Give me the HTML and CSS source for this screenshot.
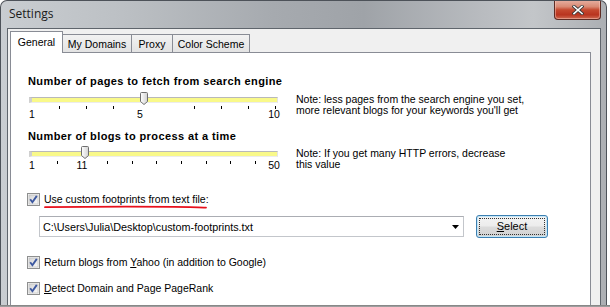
FILE: index.html
```html
<!DOCTYPE html>
<html>
<head>
<meta charset="utf-8">
<title>Settings</title>
<link rel="stylesheet" href="styles.css">
</head>
<body>
<div class="window">
  <div class="titlebar">
    <span class="title">Settings</span>
    <div class="close">
      <svg width="12" height="10" viewBox="0 0 12 10">
        <path d="M2 1.5 L10 8.5 M10 1.5 L2 8.5" stroke="#3a3a3a" stroke-width="3.2" stroke-linecap="square"/>
        <path d="M2 1.5 L10 8.5 M10 1.5 L2 8.5" stroke="#ffffff" stroke-width="1.6" stroke-linecap="square"/>
      </svg>
    </div>
  </div>
  <div class="client">
    <div class="tabs">
      <div class="tab active t-general">General</div>
      <div class="tab t-domains">My Domains</div>
      <div class="tab t-proxy">Proxy</div>
      <div class="tab t-scheme">Color Scheme</div>
    </div>
    <div class="panel">
      <div class="heading h1">Number of pages to fetch from search engine</div>
      <div class="slider-row">
        <div class="slider s1">
          <div class="track">
            <svg class="thumb" style="left:108px" width="8" height="13" viewBox="0 0 8 13">
              <defs><linearGradient id="tg1" x1="0" y1="0" x2="1" y2="0"><stop offset="0" stop-color="#ffffff"/><stop offset="1" stop-color="#d2d2d2"/></linearGradient></defs>
              <path d="M0.5 1.5 Q0.5 0.5 1.5 0.5 L6.5 0.5 Q7.5 0.5 7.5 1.5 L7.5 9.5 L4 12.5 L0.5 9.5 Z" fill="url(#tg1)" stroke="#6f6f6f"/>
            </svg>
          </div>
          <div class="ticks">
            <i style="left:31px"></i><i style="left:58px"></i><i style="left:85px"></i>
            <i style="left:166px"></i><i style="left:193px"></i><i style="left:220px"></i><i style="left:247px"></i>
          </div>
          <div class="scale">
            <span style="left:4px">1</span><span style="left:112px">5</span><span style="left:246px">10</span>
          </div>
        </div>
        <div class="note n1">Note: less pages from the search engine you set,<br>more relevant blogs for your keywords you'll get</div>
      </div>

      <div class="heading h2">Number of blogs to process at a time</div>
      <div class="slider-row">
        <div class="slider s2">
          <div class="track">
            <svg class="thumb" style="left:49px" width="8" height="13" viewBox="0 0 8 13">
              <defs><linearGradient id="tg2" x1="0" y1="0" x2="1" y2="0"><stop offset="0" stop-color="#ffffff"/><stop offset="1" stop-color="#d2d2d2"/></linearGradient></defs>
              <path d="M0.5 1.5 Q0.5 0.5 1.5 0.5 L6.5 0.5 Q7.5 0.5 7.5 1.5 L7.5 9.5 L4 12.5 L0.5 9.5 Z" fill="url(#tg2)" stroke="#6f6f6f"/>
            </svg>
          </div>
          <div class="ticks">
            <i style="left:29px"></i><i style="left:79px"></i><i style="left:104px"></i><i style="left:128px"></i>
            <i style="left:153px"></i><i style="left:178px"></i><i style="left:202px"></i><i style="left:227px"></i>
          </div>
          <div class="scale">
            <span style="left:4px">1</span><span style="left:54px">11</span><span style="left:246px">50</span>
          </div>
        </div>
        <div class="note n2">Note: If you get many HTTP errors, decrease<br>this value</div>
      </div>

      <label class="check c1">
        <svg class="box" width="13" height="13" viewBox="0 0 13 13">
          <defs><linearGradient id="cb1" x1="0" y1="0" x2="1" y2="1"><stop offset="0" stop-color="#d4d4d4"/><stop offset="1" stop-color="#fafafa"/></linearGradient></defs>
          <rect x="0.5" y="0.5" width="12" height="12" fill="#f4f4f4" stroke="#8e8f8f"/>
          <rect x="2" y="2" width="9" height="9" fill="url(#cb1)" stroke="#b9b9b9" stroke-width="0.6"/>
          <path d="M3.2 6.3 L5.4 9.2 L9.8 2.9" fill="none" stroke="#3d58a0" stroke-width="1.9"/>
        </svg>
        <span>Use custom footprints from text file:</span>
      </label>
      <svg class="redline" width="164" height="4" viewBox="0 0 164 4">
        <path d="M1 2.2 C40 1.6 90 1.4 130 1.8 C145 1.9 155 2.0 162 2.6" fill="none" stroke="#e8101c" stroke-width="1.8" stroke-linecap="round"/>
      </svg>
      <div class="file-row">
        <div class="combo">
          <span class="combo-text">C:\Users\Julia\Desktop\custom-footprints.txt</span>
          <svg class="arrow" width="7" height="4" viewBox="0 0 7 4"><path d="M0 0 H7 L3.5 4 Z" fill="#000"/></svg>
        </div>
        <div class="button"><span class="focus"><u>S</u>elect</span></div>
      </div>

      <label class="check c2">
        <svg class="box" width="13" height="13" viewBox="0 0 13 13">
          <defs><linearGradient id="cb2" x1="0" y1="0" x2="1" y2="1"><stop offset="0" stop-color="#d4d4d4"/><stop offset="1" stop-color="#fafafa"/></linearGradient></defs>
          <rect x="0.5" y="0.5" width="12" height="12" fill="#f4f4f4" stroke="#8e8f8f"/>
          <rect x="2" y="2" width="9" height="9" fill="url(#cb2)" stroke="#b9b9b9" stroke-width="0.6"/>
          <path d="M3.2 6.3 L5.4 9.2 L9.8 2.9" fill="none" stroke="#3d58a0" stroke-width="1.9"/>
        </svg>
        <span>Return blogs from <u>Y</u>ahoo (in addition to Google)</span>
      </label>
      <label class="check c3">
        <svg class="box" width="13" height="13" viewBox="0 0 13 13">
          <defs><linearGradient id="cb3" x1="0" y1="0" x2="1" y2="1"><stop offset="0" stop-color="#d4d4d4"/><stop offset="1" stop-color="#fafafa"/></linearGradient></defs>
          <rect x="0.5" y="0.5" width="12" height="12" fill="#f4f4f4" stroke="#8e8f8f"/>
          <rect x="2" y="2" width="9" height="9" fill="url(#cb3)" stroke="#b9b9b9" stroke-width="0.6"/>
          <path d="M3.2 6.3 L5.4 9.2 L9.8 2.9" fill="none" stroke="#3d58a0" stroke-width="1.9"/>
        </svg>
        <span><u>D</u>etect Domain and Page PageRank</span>
      </label>
    </div>
  </div>
</div>
<div class="bottom-line"></div>
</body>
</html>
```

FILE: styles.css
```css
* { box-sizing: border-box; }
html, body { margin: 0; padding: 0; }
body {
  width: 610px;
  height: 307px;
  overflow: hidden;
  background: #ffffff;
  font-family: "Liberation Sans", Arial, sans-serif;
  font-size: 10.5px;
  color: #000;
}

.window {
  width: 607px;
  height: 305px;
  border: 1px solid #4d5259;
  border-bottom: none;
  border-radius: 7px 7px 0 0;
  background: linear-gradient(to right, #c9cdd1 0%, #bcc0c4 20%, #a6aaaf 45%, #9fa3a8 60%, #b9bcc0 80%, #c3c6c9 88%, #acafb3 100%);
  display: flex;
  flex-direction: column;
  overflow: hidden;
}

.titlebar {
  height: 27px;
  display: flex;
  justify-content: space-between;
  align-items: flex-start;
  flex: none;
}
.title {
  font-family: "Open Sans", "Noto Sans", sans-serif;
  font-size: 12px;
  line-height: 16px;
  margin: 5px 0 0 8px;
  color: #1b1b1b;
}
.close {
  width: 47px;
  height: 20px;
  margin: -1px 5px 0 0;
  border: 1px solid #5e2c24;
  border-top: none;
  border-radius: 0 0 4px 4px;
  background: linear-gradient(to bottom, #e7b1a3 0%, #d98a74 35%, #c5492f 52%, #b9341f 78%, #cf6b52 100%);
  box-shadow: inset 0 0 0 1px rgba(255, 210, 200, 0.45);
  display: flex;
  align-items: center;
  justify-content: center;
}

.client {
  flex: 1;
  margin: 0 5px 0 6px;
  border: 1px solid #5f656c;
  border-bottom: none;
  background: #f0f0f0;
  display: flex;
  flex-direction: column;
}

.tabs {
  height: 23px;
  padding: 2px 0 0 2px;
  display: flex;
  align-items: flex-end;
  flex: none;
}
.tab {
  height: 18px;
  border: 1px solid #898c95;
  border-bottom: none;
  margin-left: -1px;
  background: linear-gradient(to bottom, #f2f2f2, #e3e3e3);
  text-align: center;
  line-height: 16px;
  padding-top: 1px;
  font-size: 10.5px;
}
.tab.active {
  height: 22px;
  margin-left: 0;
  margin-bottom: -1px;
  background: #ffffff;
  position: relative;
  z-index: 1;
  padding-top: 2px;
  line-height: 16px;
}
.t-general { width: 53px; }
.t-domains { width: 70px; margin-left: -1px; }
.t-proxy { width: 42px; }
.t-scheme { width: 78px; }

.panel {
  flex: 1;
  margin-left: 2px;
  width: 581px;
  border: 1px solid #898c95;
  border-bottom: none;
  background: #ffffff;
  padding-left: 17px;
  display: flex;
  flex-direction: column;
}

.heading {
  font-weight: bold;
  font-size: 11px;
  line-height: 13px;
  letter-spacing: 0.4px;
}
.h1 { margin-top: 22px; }
.h2 { margin-top: 11px; }

.slider-row { display: flex; align-items: flex-start; }
.slider { width: 268px; flex: none; }
.track {
  position: relative;
  margin: 9px 0 0 1px;
  width: 249px;
  height: 6px;
  background: #f9f98a;
  border-top: 1px solid #b9b9b9;
  border-left: 3px solid #d0d0d0;
  border-bottom: 1px solid #ececec;
  border-right: 1px solid #e4e4e4;
}
.s2 .track { margin-top: 8px; }
.thumb {
  position: absolute;
  top: -6px;
  display: block;
}
.ticks {
  position: relative;
  height: 3px;
  margin-top: 3px;
}
.s2 .ticks { margin-top: 4px; }
.ticks i {
  position: absolute;
  top: 0;
  width: 1px;
  height: 3px;
  background: #000;
}
.scale {
  position: relative;
  height: 10px;
  line-height: 10px;
}
.s2 .scale { margin-top: -4px; }
.scale span {
  position: absolute;
  top: 0;
  transform: translateX(-50%);
}

.note {
  line-height: 11px;
  white-space: nowrap;
}
.n1 { margin-top: 6px; }
.n2 { margin-top: 5px; }

.check {
  display: flex;
  align-items: center;
  height: 13px;
  line-height: 13px;
  margin-left: -1px;
}
.check .box { display: block; flex: none; margin-right: 4px; }
.c1 { margin-top: 23px; }
.c2 { margin-top: 18px; }
.c3 { margin-top: 13px; }

.redline {
  display: block;
  margin: -1px 0 0 16px;
}

.file-row {
  display: flex;
  align-items: center;
  height: 23px;
  margin: 6px 0 0 11px;
}
.combo {
  width: 425px;
  height: 21px;
  border: 1px solid #c3c6cb;
  border-top-color: #abadb3;
  background: #fff;
  display: flex;
  align-items: center;
  justify-content: space-between;
  padding: 0 4px 0 3px;
  font-size: 10.8px;
}
.arrow { display: block; }
.button {
  margin-left: 12px;
  width: 72px;
  height: 23px;
  border: 1px solid #3c7fb1;
  border-radius: 3px;
  background: linear-gradient(to bottom, #f4f4f4 0%, #ececec 48%, #dcdcdc 52%, #d0d0d0 100%);
  box-shadow: inset 0 0 0 1px #c4e6f7;
  padding: 2px;
  display: flex;
}
.focus {
  flex: 1;
  border: 1px dotted #333;
  text-align: center;
  line-height: 15px;
  font-size: 11px;
}

.bottom-line {
  width: 610px;
  height: 2px;
  background: linear-gradient(to bottom, #7d7d7d, #a8a8a8);
}
```
